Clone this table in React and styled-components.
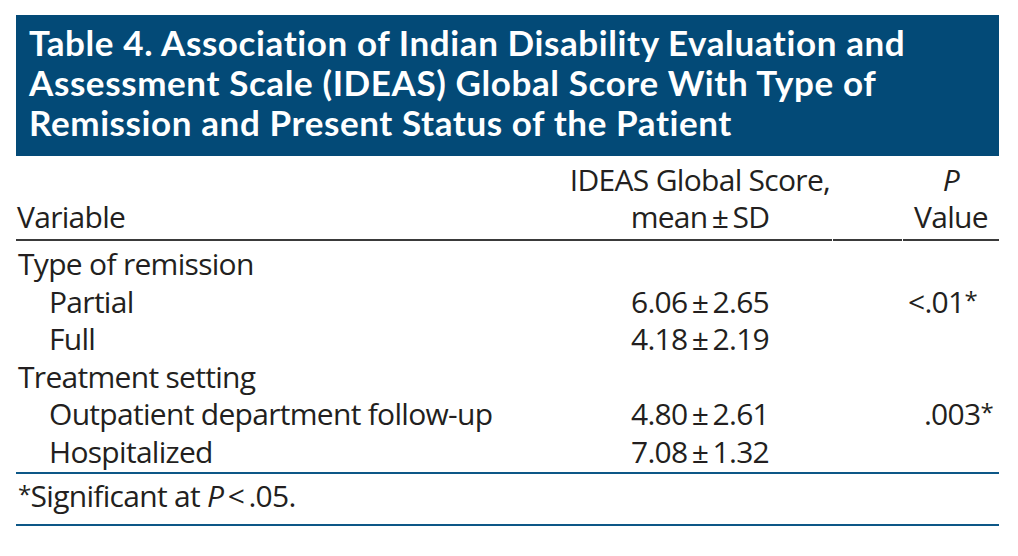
import React from 'react';
import styled, { createGlobalStyle } from 'styled-components';

const GlobalStyle = createGlobalStyle`
  body {
    margin: 0;
    background: #fff;
  }
`;

const rows = [
  { label: 'Type of remission', group: true },
  { label: 'Partial', mean: '6.06', sd: '2.65', p: '<.01', pRight: 22 },
  { label: 'Full', mean: '4.18', sd: '2.19' },
  { label: 'Treatment setting', group: true },
  { label: 'Outpatient department follow-up', mean: '4.80', sd: '2.61', p: '.003', pRight: 6 },
  { label: 'Hospitalized', mean: '7.08', sd: '1.32' },
];

const titleLines = [
  'Table 4. Association of Indian Disability Evaluation and',
  'Assessment Scale (IDEAS) Global Score With Type of',
  'Remission and Present Status of the Patient',
];

function App() {
  return (
    <>
      <GlobalStyle />
      <Page>
        <TitleBar>
          {titleLines.map((line) => (
            <TitleLine key={line}>{line}</TitleLine>
          ))}
        </TitleBar>

        <Grid>
          <HeadCell>
            <HeadLine />
            <HeadLine>Variable</HeadLine>
          </HeadCell>
          <HeadCell $center>
            <HeadLine>IDEAS Global Score,</HeadLine>
            <HeadLine>
              mean{'\u2009'}±{'\u2009'}SD
            </HeadLine>
          </HeadCell>
          <HeadCell $gapLeft $gapRight />
          <HeadCell $center>
            <HeadLine>
              <Ital>P</Ital>
            </HeadLine>
            <HeadLine>Value</HeadLine>
          </HeadCell>
        </Grid>

        <Body>
          {rows.map((row, i) => (
            <Row key={i}>
              <Label $indent={!row.group}>{row.label}</Label>
              <Score>
                {row.mean && (
                  <>
                    {row.mean}
                    {'\u2009'}±{'\u2009'}
                    {row.sd}
                  </>
                )}
              </Score>
              <span />
              <PValue $right={row.pRight}>
                {row.p && (
                  <>
                    {row.p}
                    <Star>*</Star>
                  </>
                )}
              </PValue>
            </Row>
          ))}
        </Body>

        <Footnote>
          <Star>*</Star>Significant at <Ital>P</Ital>
          {'\u2009'}&lt;{'\u2009'}.05.
        </Footnote>
      </Page>
    </>
  );
}

const Page = styled.div`
  width: 983px;
  padding: 15px 0 0 16px;
  font-family: 'Open Sans', 'Noto Sans', sans-serif;
  color: #231f20;
`;

const TitleBar = styled.div`
  height: 141px;
  box-sizing: border-box;
  padding: 7px 13px 0;
  background: #034a77;
  color: #fff;
  font-family: Lato, 'Open Sans', sans-serif;
  font-weight: 700;
  font-size: 35px;
  letter-spacing: 0.6px;
  white-space: nowrap;
`;

const TitleLine = styled.div`
  height: 40px;
  line-height: 40px;
`;

const Grid = styled.div`
  display: grid;
  grid-template-columns: 552px 264px 71px 96px;
`;

const HeadCell = styled.div`
  padding-top: 5px;
  padding-bottom: 4px;
  border-bottom: 2px solid #3a3a3a;
  margin-left: ${(p) => (p.$gapLeft ? '1px' : '0')};
  margin-right: ${(p) => (p.$gapRight ? '1px' : '0')};
  padding-left: ${(p) => (p.$center ? '0' : '1px')};
  text-align: ${(p) => (p.$center ? 'center' : 'left')};
  font-size: 30px;
  letter-spacing: -0.7px;
  white-space: nowrap;
`;

const HeadLine = styled.div`
  height: 37px;
  line-height: 37px;
`;

const Ital = styled.i`
  font-style: italic;
`;

const Body = styled.div`
  padding: 4px 0 2px;
  border-bottom: 2px solid #0d5787;
`;

const Row = styled.div`
  display: grid;
  grid-template-columns: 552px 264px 71px 96px;
  height: 37.5px;
  font-size: 30px;
  line-height: 37.5px;
  letter-spacing: -0.7px;
  white-space: nowrap;
`;

const Label = styled.div`
  padding-left: ${(p) => (p.$indent ? '33px' : '2px')};
`;

const Score = styled.div`
  text-align: center;
`;

const PValue = styled.div`
  text-align: right;
  padding-right: ${(p) => p.$right || 0}px;
`;

const Star = styled.span`
  font-size: 0.8em;
  line-height: 0;
  vertical-align: 0.15em;
`;

const Footnote = styled.div`
  height: 36px;
  padding: 4px 0 10px 2px;
  border-bottom: 2px solid #0d5787;
  font-size: 30px;
  line-height: 36px;
  letter-spacing: -0.7px;
`;

export default App;
